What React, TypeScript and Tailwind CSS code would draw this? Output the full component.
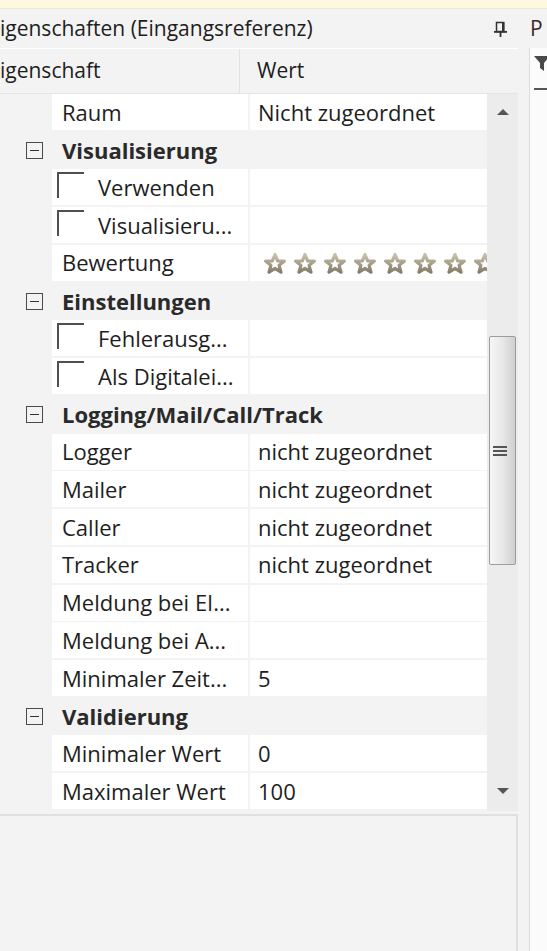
import React from "react";

type Row =
  | { t: "prop"; n: string; v?: string }
  | { t: "cat"; n: string }
  | { t: "check"; n: string }
  | { t: "stars"; n: string };

const rows: Row[] = [
  { t: "prop", n: "Raum", v: "Nicht zugeordnet" },
  { t: "cat", n: "Visualisierung" },
  { t: "check", n: "Verwenden" },
  { t: "check", n: "Visualisieru..." },
  { t: "stars", n: "Bewertung" },
  { t: "cat", n: "Einstellungen" },
  { t: "check", n: "Fehlerausg..." },
  { t: "check", n: "Als Digitalei..." },
  { t: "cat", n: "Logging/Mail/Call/Track" },
  { t: "prop", n: "Logger", v: "nicht zugeordnet" },
  { t: "prop", n: "Mailer", v: "nicht zugeordnet" },
  { t: "prop", n: "Caller", v: "nicht zugeordnet" },
  { t: "prop", n: "Tracker", v: "nicht zugeordnet" },
  { t: "prop", n: "Meldung bei EI..." },
  { t: "prop", n: "Meldung bei A..." },
  { t: "prop", n: "Minimaler Zeit...", v: "5" },
  { t: "cat", n: "Validierung" },
  { t: "prop", n: "Minimaler Wert", v: "0" },
  { t: "prop", n: "Maximaler Wert", v: "100" },
];

function Star() {
  return (
    <svg width="22" height="21" viewBox="0 0 22 21" className="shrink-0">
      <defs>
        <linearGradient id="sg" x1="0" y1="0" x2="0" y2="1">
          <stop offset="0" stopColor="#c8c1ac" />
          <stop offset="1" stopColor="#857d68" />
        </linearGradient>
      </defs>
      <polygon
        points="11,1.5 13.6,7.8 20.4,8 15.1,12.3 17,19.2 11,15.3 5,19.2 6.9,12.3 1.6,8 8.4,7.8"
        fill="#fff"
        stroke="url(#sg)"
        strokeWidth="3.2"
        strokeLinejoin="round"
      />
    </svg>
  );
}

function Minus() {
  return (
    <div className="w-[17px] h-[17px] border-[1.5px] border-[#4a4a4a] flex items-center justify-center bg-[#f3f3f3]">
      <div className="w-[9px] h-[1.5px] bg-[#333]" />
    </div>
  );
}

function Check() {
  return <div className="w-[27px] h-[26px] border-l-2 border-t-2 border-[#4f4f4f] shrink-0" />;
}

function GridRow({ r }: { r: Row }) {
  if (r.t === "cat") {
    return (
      <div className="h-[37.78px] flex items-center">
        <div className="w-[52px] flex justify-end pr-[9px]">
          <Minus />
        </div>
        <div className="pl-[10px] font-bold text-[#2a2a2a]">{r.n}</div>
      </div>
    );
  }
  return (
    <div className="h-[37.78px] flex items-start">
      <div className="w-[52px] shrink-0" />
      <div className="w-[196px] h-[36px] bg-white flex items-center shrink-0 overflow-hidden">
        {r.t === "check" ? (
          <div className="flex items-start h-full pt-[3px] pl-[5px]">
            <Check />
            <div className="pl-[14px] self-center mt-[-3px] whitespace-nowrap">{r.n}</div>
          </div>
        ) : (
          <div className="pl-[10px] whitespace-nowrap">{r.n}</div>
        )}
      </div>
      <div className="w-[2px] shrink-0" />
      <div className="w-[237px] h-[36px] bg-white flex items-center shrink-0 overflow-hidden">
        {r.t === "stars" ? (
          <div className="flex gap-[8px] pl-[14px] pt-[2px]">
            {Array.from({ length: 8 }).map((_, i) => (
              <Star key={i} />
            ))}
          </div>
        ) : (
          <div className="pl-[8px] whitespace-nowrap">{r.v ?? ""}</div>
        )}
      </div>
    </div>
  );
}

function Pin() {
  return (
    <svg width="13" height="16" viewBox="0 0 13 16">
      <rect x="2.5" y="1.5" width="7" height="9" fill="none" stroke="#333" strokeWidth="1.5" />
      <rect x="8" y="1" width="2.5" height="10" fill="#333" />
      <rect x="0" y="10" width="13" height="1.8" fill="#333" />
      <rect x="5.6" y="11" width="1.8" height="5" fill="#333" />
    </svg>
  );
}

export default function App() {
  return (
    <div
      className="w-[547px] h-[951px] overflow-hidden bg-[#f3f3f3] text-[#1e1e1e] text-[22px] flex flex-col"
      style={{ fontFamily: '"Open Sans", "Noto Sans", sans-serif' }}
    >
      <div className="h-[9px] bg-[#fdf9de] border-b border-[#efe9c8] shrink-0" />
      <div className="h-[39px] flex items-center shrink-0 text-[21px]">
        <div className="w-[520px] flex items-center">
          <div className="whitespace-nowrap">igenschaften (Eingangsreferenz)</div>
          <div className="ml-auto mr-[13px] mt-[1px]">
            <Pin />
          </div>
        </div>
        <div className="pl-[10px] text-[#3b2a22]">P</div>
      </div>
      <div className="flex flex-1 min-h-0">
        <div className="w-[518px] flex flex-col shrink-0">
          <div className="h-[46px] border-t border-white border-b border-b-[#e4e4e4] flex shrink-0 text-[21px]">
            <div className="w-[240px] border-r border-[#e2e2e2] flex items-center">igenschaft</div>
            <div className="pl-[17px] flex items-center">Wert</div>
          </div>
          <div className="flex h-[717px] shrink-0">
            <div className="w-[487px] flex flex-col">
              {rows.map((r, i) => (
                <GridRow key={i} r={r} />
              ))}
            </div>
            <div className="w-[31px] bg-[#ececec] relative flex flex-col items-center">
              <svg width="14" height="8" viewBox="0 0 14 8" className="mt-[14px]">
                <polygon points="1,7 7,1 13,7" fill="#555" />
              </svg>
              <div className="absolute left-[2px] right-[2px] top-[242px] h-[229px] rounded-[2px] border border-[#9c9c9c] bg-gradient-to-r from-[#f6f6f6] via-[#e8e8e8] to-[#cfcfcf] flex items-center justify-center">
                <div className="flex flex-col gap-[2px] -ml-[6px]">
                  <div className="w-[14px] h-[2px] bg-[#555]" />
                  <div className="w-[14px] h-[2px] bg-[#555]" />
                  <div className="w-[14px] h-[2px] bg-[#555]" />
                </div>
              </div>
              <svg width="14" height="8" viewBox="0 0 14 8" className="absolute bottom-[16px]">
                <polygon points="1,1 13,1 7,7" fill="#555" />
              </svg>
            </div>
          </div>
          <div className="flex-1 mt-[3px] border-t-2 border-r-2 border-[#e0e0e0] bg-[#f3f3f3]" />
        </div>
        <div className="w-[11px] shrink-0" />
        <div className="flex-1 border-l border-[#dcdcdc] bg-[#fbfbfb] flex flex-col pl-[4px]">
          <svg width="16" height="16" viewBox="0 0 16 16" className="mt-[8px]">
            <polygon points="0,0 16,0 10,7 10,15 6,12 6,7" fill="#4a4a4a" />
          </svg>
          <div className="mt-[16px] h-[2px] bg-[#555]" />
        </div>
      </div>
    </div>
  );
}
